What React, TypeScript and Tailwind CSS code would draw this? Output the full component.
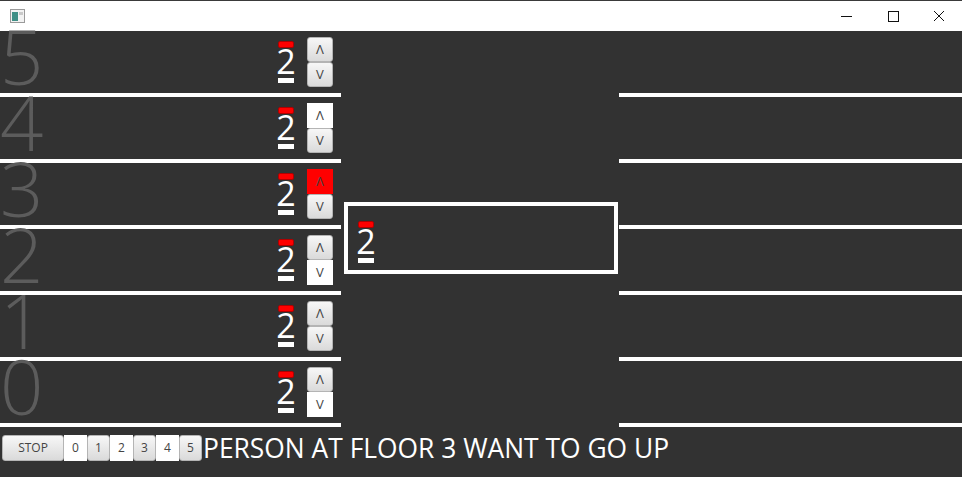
import React from 'react';

type BtnState = 'grey' | 'white' | 'red';

const font = { fontFamily: '"Open Sans", "Noto Sans", sans-serif' };

const floors: { n: number; up: BtnState; down: BtnState }[] = [
  { n: 5, up: 'grey', down: 'grey' },
  { n: 4, up: 'white', down: 'grey' },
  { n: 3, up: 'red', down: 'grey' },
  { n: 2, up: 'grey', down: 'white' },
  { n: 1, up: 'grey', down: 'grey' },
  { n: 0, up: 'grey', down: 'white' }
];

const stateClass: Record<BtnState, string> = {
  grey: 'bg-linear-to-b from-[#f7f7f7] to-[#dadada] border border-[#b4b4b4] rounded-[3px]',
  white: 'bg-white',
  red: 'bg-[#ff0000]'
};

function Btn({ state, label, className }: { state: BtnState; label: string; className: string }) {
  return (
    <div className={`flex items-center justify-center text-[#444] ${stateClass[state]} ${className}`}>
      {label}
    </div>
  );
}

function Indicator() {
  return (
    <div className="flex w-[16px] flex-col items-center">
      <div className="h-[7px] w-[16px] rounded-[2px] border border-[#b00000] bg-[#ff0000]" />
      <div className="h-[26px] text-[34px] leading-[26px] font-normal text-white">2</div>
      <div className="mt-[4px] h-[5px] w-[16px] bg-white" />
    </div>
  );
}

function Line() {
  return <div className="h-[4px] w-full bg-white" />;
}

export default function App() {
  return (
    <div className="flex h-[477px] w-[962px] flex-col overflow-hidden bg-[#323232]" style={font}>
      <div className="flex h-[31px] shrink-0 items-center border-t border-[#3a3a3a] bg-white">
        <svg className="ml-[10px]" width="15" height="14" viewBox="0 0 15 14">
          <rect x="0.5" y="0.5" width="14" height="13" fill="#f2f2f2" stroke="#9a9a9a" />
          <rect x="2" y="3" width="6" height="9" fill="#3f8f86" />
          <rect x="9" y="3" width="4" height="3" fill="#c9c9c9" />
        </svg>
        <div className="ml-auto flex h-full items-center">
          <svg width="46" height="30" viewBox="0 0 46 30">
            <line x1="17" y1="15.5" x2="28" y2="15.5" stroke="#111" strokeWidth="1" />
          </svg>
          <svg width="46" height="30" viewBox="0 0 46 30">
            <rect x="18.5" y="10.5" width="10" height="10" fill="none" stroke="#111" strokeWidth="1" />
          </svg>
          <svg width="46" height="30" viewBox="0 0 46 30">
            <path d="M18 10 L28 20 M28 10 L18 20" stroke="#111" strokeWidth="1" />
          </svg>
        </div>
      </div>

      <div className="flex">
        <div className="flex w-[341px] flex-col">
          {floors.map((f) => (
            <div key={f.n}>
              <div className="flex h-[62px] items-start">
                <div className="h-[50px] w-[60px] text-[76px] leading-[50px] font-light text-[#5c5c5c]">{f.n}</div>
                <div className="ml-[218px] mt-[10px]">
                  <Indicator />
                </div>
                <div className="ml-[13px] mt-[6px] flex flex-col text-[13px]">
                  <Btn state={f.up} label="Λ" className="h-[25px] w-[26px]" />
                  <Btn state={f.down} label="V" className="h-[25px] w-[26px]" />
                </div>
              </div>
              <Line />
            </div>
          ))}
        </div>

        <div className="relative w-[278px]">
          <div className="absolute left-[3px] top-[171px] h-[72px] w-[274px] border-[4px] border-white pl-[10px] pt-[15px]">
            <Indicator />
          </div>
        </div>

        <div className="flex flex-1 flex-col">
          {floors.map((f) => (
            <div key={f.n}>
              <div className="h-[62px]" />
              <Line />
            </div>
          ))}
        </div>
      </div>

      <div className="flex items-center pl-[2px] pt-[8px] text-[12px]">
        <Btn state="grey" label="STOP" className="h-[26px] w-[62px]" />
        {[0, 1, 2, 3, 4, 5].map((n) => (
          <Btn key={n} state={n % 2 === 0 ? 'white' : 'grey'} label={String(n)} className="h-[26px] w-[23px]" />
        ))}
        <span className="ml-[1px] text-[26.4px] leading-[26px] text-white">PERSON AT FLOOR 3 WANT TO GO UP</span>
      </div>
    </div>
  );
}
